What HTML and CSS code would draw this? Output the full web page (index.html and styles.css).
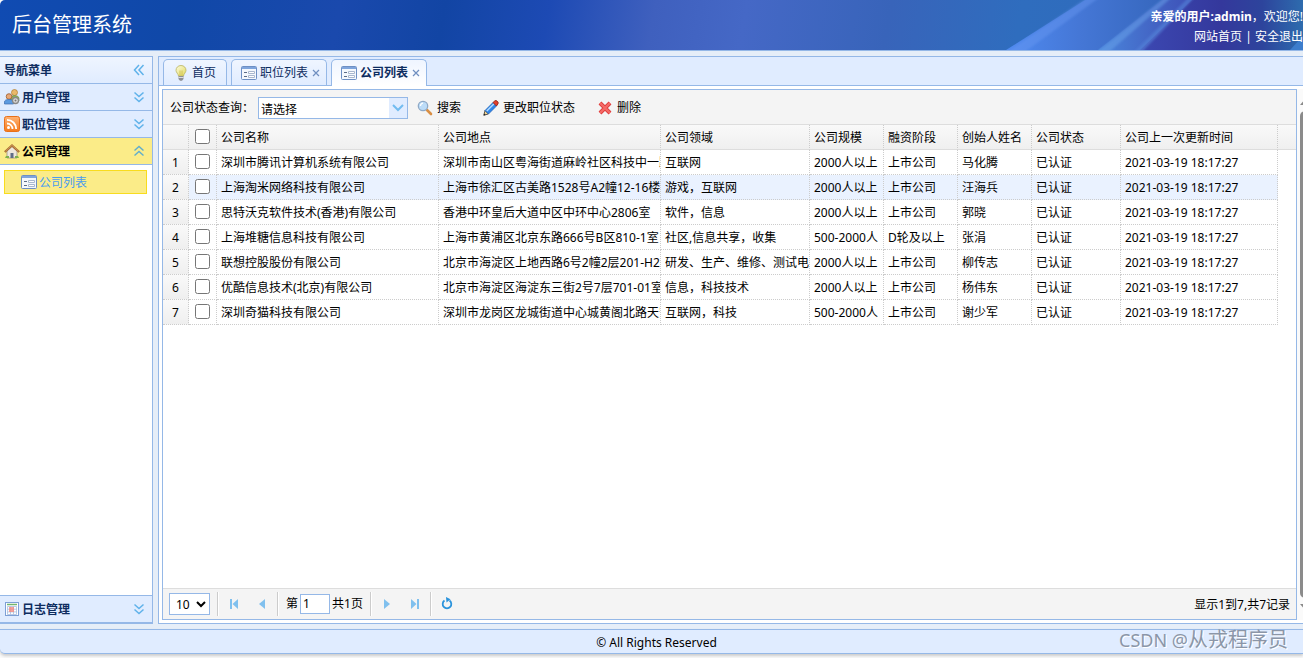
FILE: index.html
```html
<!DOCTYPE html>
<html lang="zh-CN">
<head>
<meta charset="utf-8">
<title>后台管理系统</title>
<link rel="stylesheet" href="styles.css">
</head>
<body>
<svg class="defs" aria-hidden="true">
  <defs>
    <linearGradient id="bulb" x1="0" y1="0" x2="1" y2="1"><stop offset="0" stop-color="#fdfce0"/><stop offset="1" stop-color="#e0d95a"/></linearGradient>
    <linearGradient id="rss" x1="0" y1="0" x2="0" y2="1"><stop offset="0" stop-color="#ffb273"/><stop offset="1" stop-color="#f57a1c"/></linearGradient>
    <symbol id="i-form" viewBox="0 0 16 16">
      <rect x="0.5" y="1.5" width="15" height="13" rx="1" fill="#f4f8fd" stroke="#6d8fc4"/>
      <path d="M1 2h14v2H1z" fill="#7fa5dc"/>
      <path d="M3 7.500h3M3 11.500h3" stroke="#5b6b86"/>
      <path d="M7.500 6.500h6v2h-6zM7.500 10.500h6v2h-6z" fill="#fff" stroke="#a9b8cf"/>
    </symbol>
    <symbol id="i-down" viewBox="0 0 16 16"><path d="M3.500 3.500 8 7.500l4.500-4M3.500 8.500 8 12.500l4.500-4" fill="none" stroke="#5fb2ea" stroke-width="1.500"/></symbol>
    <symbol id="i-up" viewBox="0 0 16 16"><path d="M3.500 7.500 8 3.500l4.500 4M3.500 12.500 8 8.500l4.500 4" fill="none" stroke="#62aecb" stroke-width="1.500"/></symbol>
    <symbol id="i-left" viewBox="0 0 16 16"><path d="M8 3 3.500 8 8 13M12.500 3 8 8l4.500 5" fill="none" stroke="#5fb2ea" stroke-width="1.500"/></symbol>
    <symbol id="i-close" viewBox="0 0 8 8"><path d="M1 1l6 6M7 1l-6 6" fill="none" stroke="#6f8fc0" stroke-width="1.200"/></symbol>
  </defs>
</svg>
<div class="app">
  <header class="banner">
    <svg class="banner-art" viewBox="0 0 353 50" preserveAspectRatio="none" aria-hidden="true">
      <defs>
        <linearGradient id="b1" x1="0" y1="0" x2="1" y2="0"><stop offset="0" stop-color="#4f8af0"/><stop offset="0.450" stop-color="#4577d6"/><stop offset="1" stop-color="#3566bc"/></linearGradient>
        <linearGradient id="b2" x1="0" y1="0" x2="1" y2="0"><stop offset="0" stop-color="#4a86dc"/><stop offset="0.500" stop-color="#4364c4"/><stop offset="1" stop-color="#3a46b0"/></linearGradient>
        <linearGradient id="b3" x1="0" y1="0" x2="1" y2="0"><stop offset="0" stop-color="#3c48b2"/><stop offset="0.500" stop-color="#34389c"/><stop offset="0.750" stop-color="#2d449c"/><stop offset="1" stop-color="#2e6cae"/></linearGradient>
        <filter id="soft"><feGaussianBlur stdDeviation="1"/></filter>
      </defs>
      <path d="M56 50 135 0H218L152 50z" fill="url(#b1)"/>
      <path d="M148 50 212 0h50L196 50z" fill="url(#b2)"/>
      <path d="M190 50 242 0H353V50z" fill="url(#b3)"/>
      <g filter="url(#soft)">
        <path d="M54 54 138-3h12L72 54z" fill="#6c9cf2" opacity="0.400"/>
        <path d="M146 53 214-2h7L158 53z" fill="#6aa2ea" opacity="0.500"/>
        <path d="M184 52 238-2h6L192 52z" fill="#5584d8" opacity="0.600"/>
      </g>
      <path d="M340 50 353 36V50z" fill="#3d7dcc"/>
    </svg>
    <h1 class="title">后台管理系统</h1>
    <div class="user">
      <p><strong>亲爱的用户:admin</strong>，欢迎您!</p>
      <p><a href="#">网站首页</a> | <a href="#">安全退出</a></p>
    </div>
  </header>

  <div class="body">
    <aside class="side">
      <div class="side-head"><span class="grow">导航菜单</span><button class="tool" aria-label="收起"><svg><use href="#i-left"/></svg></button></div>
      <button class="acc">
        <svg viewBox="0 0 16 16"><circle cx="10.500" cy="3.500" r="3" fill="#e9b96a" stroke="#b07a2c" stroke-width="0.700"/><path d="M6.500 12V9q0-2.500 4-2.500T15 9v3z" fill="#8fb05a" stroke="#6a8a3c" stroke-width="0.600"/><circle cx="5" cy="7.500" r="2.800" fill="#e8a878" stroke="#9a5a2c" stroke-width="0.800"/><path d="M0.500 15v-2q0-2.500 4.500-2.500T9.500 13v2z" fill="#5c9be0" stroke="#3c6cae" stroke-width="0.700"/><circle cx="11.500" cy="11.500" r="3" fill="#ddd" stroke="#888" stroke-width="1.300"/><circle cx="11.500" cy="11.500" r="1" fill="#777"/></svg>
        <span class="grow">用户管理</span><svg><use href="#i-down"/></svg></button>
      <button class="acc">
        <svg viewBox="0 0 16 16"><rect x="0.500" y="0.500" width="15" height="15" rx="2" fill="url(#rss)" stroke="#e8701a"/><circle cx="4.500" cy="11.500" r="1.500" fill="#fff"/><path d="M3 7.500a5.500 5.500 0 0 1 5.500 5.500M3 3.800a9.200 9.200 0 0 1 9.200 9.200" fill="none" stroke="#fff" stroke-width="1.800"/></svg>
        <span class="grow">职位管理</span><svg><use href="#i-down"/></svg></button>
      <button class="acc acc-on" aria-expanded="true">
        <svg viewBox="0 0 16 16"><path d="M3 8 8 3.500 13 8v7H3z" fill="#eee7dc" stroke="#8f8678" stroke-width="0.700"/><path d="M0.800 9 8 2.500 15.200 9" fill="none" stroke="#a86c32" stroke-width="2.200"/><path d="M1.500 8.200 8 2.300l6.500 5.900" fill="none" stroke="#d9a566" stroke-width="0.700"/><path d="M6.500 10h3v5h-3z" fill="#5f6c86"/><path d="M1 15h4v-2H2zM11 15h4l-1-2h-3z" fill="#7eb04c"/></svg>
        <span class="grow">公司管理</span><svg><use href="#i-up"/></svg></button>
      <nav class="side-list"><a class="side-link" href="#"><svg><use href="#i-form"/></svg><span class="grow">公司列表</span></a></nav>
      <button class="acc acc-last">
        <svg viewBox="0 0 16 16"><rect x="1.500" y="1.500" width="13" height="13" fill="#fff" stroke="#7da0d6"/><path d="M3 3.500h10" stroke="#74b56e" stroke-width="1.500"/><path d="M3.500 5.500h9v8h-9zM3.500 8.200h9M3.500 10.900h9M6.500 5.500v8M9.500 5.500v8" fill="none" stroke="#a9bede" stroke-width="0.800"/><path d="M5 6h5v5H5z" fill="#f58a80" opacity="0.800"/></svg>
        <span class="grow">日志管理</span><svg><use href="#i-down"/></svg></button>
    </aside>

    <main class="main">
      <div class="tabs">
        <div class="tab"><button class="tab-btn"><svg viewBox="0 0 16 16"><path d="M8 0.500c3 0 5 2.200 5 4.800 0 2.200-2.300 3.500-2.500 5.700h-5C5.300 8.800 3 7.500 3 5.300 3 2.700 5 0.500 8 0.500z" fill="url(#bulb)" stroke="#b9b35e" stroke-width="0.800"/><path d="M7 5.500v5M9 5.500v5" stroke="#c8b53c" stroke-width="0.700"/><path d="M5.500 11h5v3L9 15.700H7L5.500 14z" fill="#8d8f94"/><path d="M5.500 12.500h5" stroke="#ddd"/></svg>首页</button></div>
        <div class="tab"><button class="tab-btn"><svg><use href="#i-form"/></svg>职位列表</button><button class="close" aria-label="关闭职位列表"><svg><use href="#i-close"/></svg></button></div>
        <div class="tab tab-on"><button class="tab-btn"><svg><use href="#i-form"/></svg>公司列表</button><button class="close" aria-label="关闭公司列表"><svg><use href="#i-close"/></svg></button></div>
      </div>
      <div class="view">
        <section class="grid">
          <div class="toolbar">
            <label for="status">公司状态查询：</label>
            <span class="combo"><select id="status"><option>请选择</option></select><svg viewBox="0 0 18 20" aria-hidden="true"><path d="M4 7l5 5 5-5" fill="none" stroke="#72bcf0" stroke-width="2"/></svg></span>
            <button class="act"><svg viewBox="0 0 16 16"><path d="M10 10l4 4" stroke="#d98f45" stroke-width="2.600" stroke-linecap="round"/><circle cx="6" cy="6" r="4.700" fill="#bcdcf8" stroke="#8fa9c6" stroke-width="1.300"/><path d="M3.500 6A2.600 2.600 0 0 1 6 3.200" stroke="#fff" stroke-width="1.300" fill="none"/></svg>搜索</button>
            <button class="act"><svg viewBox="0 0 16 16"><path d="M0.800 15.200 2 10.500 5.500 14z" fill="#f7d790" stroke="#333" stroke-width="0.800"/><path d="M2 10.500 10 2.500 13.500 6 5.500 14z" fill="#2f86ea" stroke="#1d5cb0" stroke-width="0.700"/><path d="M3.800 11 11 3.800" stroke="#b4dcff" stroke-width="1.500"/><path d="M10 2.500 12 0.700q1-.5 2 .3l.8.800q.8 1 .2 2L13.500 6z" fill="#e3402c" stroke="#8c1c10" stroke-width="0.800"/><path d="M0.600 15.400l.6-2 1.500 1.500z" fill="#222"/></svg>更改职位状态</button>
            <button class="act"><svg viewBox="0 0 16 16"><path d="M3 3l10 10M13 3 3 13" stroke="#dc3a3a" stroke-width="4"/><path d="M3 3l10 10M13 3 3 13" stroke="#f56a66" stroke-width="2.400"/></svg>删除</button>
          </div>
          <div class="table-wrap">
            <table>
              <colgroup><col class="c-no"><col class="c-ck"><col class="c-xl"><col class="c-xl"><col class="c-lg"><col class="c-sm"><col class="c-sm"><col class="c-sm"><col class="c-md"><col class="c-time"><col></colgroup>
              <thead><tr><th></th><th><input type="checkbox" aria-label="全选"></th><th>公司名称</th><th>公司地点</th><th>公司领域</th><th>公司规模</th><th>融资阶段</th><th>创始人姓名</th><th>公司状态</th><th>公司上一次更新时间</th><th></th></tr></thead>
              <tbody>
                <tr><td>1</td><td><input type="checkbox" aria-label="选择第1行"></td><td>深圳市腾讯计算机系统有限公司</td><td>深圳市南山区粤海街道麻岭社区科技中一路</td><td>互联网</td><td>2000人以上</td><td>上市公司</td><td>马化腾</td><td>已认证</td><td>2021-03-19 18:17:27</td><td></td></tr>
                <tr class="hover"><td>2</td><td><input type="checkbox" aria-label="选择第2行"></td><td>上海淘米网络科技有限公司</td><td>上海市徐汇区古美路1528号A2幢12-16楼</td><td>游戏，互联网</td><td>2000人以上</td><td>上市公司</td><td>汪海兵</td><td>已认证</td><td>2021-03-19 18:17:27</td><td></td></tr>
                <tr><td>3</td><td><input type="checkbox" aria-label="选择第3行"></td><td>思特沃克软件技术(香港)有限公司</td><td>香港中环皇后大道中区中环中心2806室</td><td>软件，信息</td><td>2000人以上</td><td>上市公司</td><td>郭晓</td><td>已认证</td><td>2021-03-19 18:17:27</td><td></td></tr>
                <tr><td>4</td><td><input type="checkbox" aria-label="选择第4行"></td><td>上海堆糖信息科技有限公司</td><td>上海市黄浦区北京东路666号B区810-1室</td><td>社区,信息共享，收集</td><td>500-2000人</td><td>D轮及以上</td><td>张涓</td><td>已认证</td><td>2021-03-19 18:17:27</td><td></td></tr>
                <tr><td>5</td><td><input type="checkbox" aria-label="选择第5行"></td><td>联想控股股份有限公司</td><td>北京市海淀区上地西路6号2幢2层201-H2</td><td>研发、生产、维修、测试电</td><td>2000人以上</td><td>上市公司</td><td>柳传志</td><td>已认证</td><td>2021-03-19 18:17:27</td><td></td></tr>
                <tr><td>6</td><td><input type="checkbox" aria-label="选择第6行"></td><td>优酷信息技术(北京)有限公司</td><td>北京市海淀区海淀东三街2号7层701-01室</td><td>信息，科技技术</td><td>2000人以上</td><td>上市公司</td><td>杨伟东</td><td>已认证</td><td>2021-03-19 18:17:27</td><td></td></tr>
                <tr><td>7</td><td><input type="checkbox" aria-label="选择第7行"></td><td>深圳奇猫科技有限公司</td><td>深圳市龙岗区龙城街道中心城黄阁北路天安</td><td>互联网，科技</td><td>500-2000人</td><td>上市公司</td><td>谢少军</td><td>已认证</td><td>2021-03-19 18:17:27</td><td></td></tr>
              </tbody>
            </table>
          </div>
          <div class="pager">
            <select class="size" aria-label="每页条数"><option>10</option></select>
            <i class="sep"></i>
            <button class="pg" aria-label="第一页"><svg viewBox="0 0 16 16"><path d="M4 3h2v10H4zM12 3v10L6.500 8z"/></svg></button>
            <button class="pg" aria-label="上一页"><svg viewBox="0 0 16 16"><path d="M11 3v10L5 8z"/></svg></button>
            <i class="sep"></i>
            <label class="page">第<input type="text" value="1">共1页</label>
            <i class="sep"></i>
            <button class="pg" aria-label="下一页"><svg viewBox="0 0 16 16"><path d="M5 3v10l6-5z"/></svg></button>
            <button class="pg" aria-label="最后一页"><svg viewBox="0 0 16 16"><path d="M4 3v10l5.500-5zM10 3h2v10h-2z"/></svg></button>
            <i class="sep"></i>
            <button class="pg" aria-label="刷新"><svg viewBox="0 0 16 16"><path d="M5.500 4.500A4.300 4.300 0 1 0 10.500 4.500" fill="none" stroke="#2a93dc" stroke-width="1.800"/><path d="M7 1l4.500 2.200L7.500 6.500z" fill="#2a93dc"/></svg></button>
            <span class="info">显示1到7,共7记录</span>
          </div>
        </section>
        <div class="scroll" aria-hidden="true">
          <svg viewBox="0 0 12 8"><path d="M1 7l5-6 5 6z"/></svg>
          <i class="thumb"></i>
          <svg viewBox="0 0 12 8"><path d="M1 1l5 6 5-6z"/></svg>
        </div>
      </div>
    </main>
  </div>

  <footer class="foot">© All Rights Reserved<span class="mark"><span class="mark-latin">CSDN @</span>从戎程序员</span></footer>
</div>
</body>
</html>
```
FILE: styles.css
```css
* { box-sizing: border-box; }
body {
  margin: 0;
  background: #fafafa;
  color: #000;
  font: 12px/20px "Noto Sans", "Noto Sans CJK SC", sans-serif;
}
button, input, select { font: inherit; color: inherit; margin: 0; }
button { border: 0; padding: 0; background: none; cursor: pointer; }
svg { display: block; flex: none; width: 16px; height: 16px; }
p, h1 { margin: 0; }
.defs { position: absolute; width: 0; height: 0; }
.grow { flex: 1; padding-top: 2px; text-align: left; }

.app {
  display: flex;
  flex-direction: column;
  height: 100vh;
  padding-bottom: 4px;
  overflow: hidden;
}

.banner {
  position: relative;
  display: flex;
  justify-content: space-between;
  align-items: center;
  height: 51px;
  padding-left: 12px;
  border-bottom: 1px solid #95b8e7;
  border-top-left-radius: 5px;
  background: linear-gradient(100deg, #104bb2 0%, #1048a8 14%, #1a49ad 26%, #1245a4 34%, #1d4ab4 42%, #3f60be 50%, #4568c6 57%, #3864ba 68%, #2f6dbe 78%, #3069b8 100%);
  color: #fff;
}
.banner-art { position: absolute; top: 0; right: 0; width: 353px; height: 50px; }
.title { position: relative; font-size: 20px; line-height: 30px; font-weight: 400; }
.user { position: relative; padding-top: 4px; text-align: right; white-space: nowrap; }
.user a { color: #fff; text-decoration: none; }

.body {
  display: flex;
  flex: 1;
  gap: 5px;
  min-height: 0;
  padding: 5px 0;
  background: #e6eef8;
}

.side {
  display: flex;
  flex-direction: column;
  width: 153px;
  flex: none;
  border: solid #95b8e7;
  border-width: 1px 1px 1px 0;
  background: #fff;
  color: #0e2d5f;
  font-weight: 700;
}
.side-head, .acc {
  display: flex;
  align-items: center;
  gap: 2px;
  height: 27px;
  padding: 0 5px 0 4px;
  border-bottom: 1px solid #95b8e7;
  background: #e0ecff;
}
.side-head { background: linear-gradient(#eff5ff, #e0ecff); }
.acc-on { background: #fbec88; color: #000; }
.side-list { flex: 1; padding: 5px 5px 0 4px; border-bottom: 1px solid #95b8e7; }
.side-link {
  display: flex;
  align-items: center;
  gap: 2px;
  height: 24px;
  padding-left: 16px;
  border: 1px solid #f8dc1e;
  background: #fbec88;
  color: #4a9cf0;
  font-weight: 400;
  text-decoration: none;
}

.main {
  display: flex;
  flex: 1;
  flex-direction: column;
  min-width: 0;
  border: solid #95b8e7;
  border-width: 1px 0 1px 1px;
  background: #fff;
}
.tabs {
  display: flex;
  gap: 4px;
  height: 29px;
  padding: 2px 0 0 4px;
  border-bottom: 1px solid #95b8e7;
  background: #e0ecff;
}
.tab {
  display: flex;
  align-items: center;
  height: 26px;
  padding: 0 10px 0 9px;
  border: 1px solid #95b8e7;
  border-bottom: 0;
  border-radius: 5px 5px 0 0;
  background: linear-gradient(#eff5ff, #e0ecff);
  color: #0e2d5f;
}
.tab:not(:first-child) { padding-right: 6px; }
.tab-on { height: 27px; background: linear-gradient(#eff5ff, #fff); font-weight: 700; }
.tab-btn { display: flex; align-items: center; gap: 3px; font-weight: inherit; }
.close { margin-left: 4px; }
.close svg { width: 8px; height: 8px; }

.view { display: flex; flex: 1; min-height: 0; padding: 3px 0 3px 3px; }
.grid {
  display: flex;
  flex: 1;
  flex-direction: column;
  min-width: 0;
  border: 1px solid #95b8e7;
}
.toolbar {
  display: flex;
  align-items: center;
  height: 35px;
  padding: 2px 0 0 7px;
  border-bottom: 1px solid #ddd;
  background: #f4f4f4;
}
.combo { position: relative; width: 150px; margin: 0 9px 0 4px; }
.combo select {
  display: block;
  appearance: none;
  width: 100%;
  height: 22px;
  padding: 2px 20px 0 2px;
  border: 1px solid #95b8e7;
  border-radius: 0;
  background: #fff;
}
.combo svg { position: absolute; top: 1px; right: 1px; width: 18px; height: 20px; background: #e0ecff; pointer-events: none; }
.act { display: flex; align-items: center; gap: 4px; margin-right: 22px; }

.table-wrap { flex: 1; min-height: 0; overflow: hidden; }
table { width: 100%; border-collapse: separate; border-spacing: 0; table-layout: fixed; }
.c-no { width: 26px; }
.c-ck { width: 28px; }
.c-xl { width: 222px; }
.c-lg { width: 149px; }
.c-sm { width: 74px; }
.c-md { width: 89px; }
.c-time { width: 157px; }
th, td {
  height: 25px;
  padding: 2px 0 0 4px;
  overflow: hidden;
  border: dotted #ccc;
  border-width: 0 1px 1px 0;
  font-weight: 400;
  text-align: left;
  white-space: nowrap;
}
th { border-bottom: 1px solid #ddd; }
thead tr { background: linear-gradient(#f9f9f9, #efefef); }
td:first-child { padding: 2px 0 0; background: linear-gradient(#f9f9f9, #efefef); text-align: center; }
th:last-child { border-right: 0; }
td:last-child { border: 0; background: #fff; }
th:nth-child(2), td:nth-child(2) { padding: 0 0 1px; }
.hover { background: #eaf2ff; }
input[type="checkbox"] { display: block; width: 15px; height: 15px; margin: 0 auto; }

.pager {
  display: flex;
  align-items: center;
  height: 31px;
  padding: 0 6px;
  border-top: 1px solid #ddd;
  background: #f4f4f4;
}
.size { width: 41px; height: 22px; padding-left: 2px; margin-right: 6px; border: 1px solid #95b8e7; background-color: #fff; }
.sep { width: 2px; height: 24px; margin: 0 1px; border-left: 1px solid #ccc; background: #fff; }
.pg { display: grid; place-items: center; width: 28px; height: 24px; }
.pg svg { fill: #80c0ee; }
.page { display: flex; align-items: center; margin: 0 6px; }
.page input { width: 30px; height: 20px; margin: 0 2px; padding: 0 2px; border: 1px solid #95b8e7; }
.info { margin-left: auto; padding-top: 2px; }

.scroll {
  display: flex;
  flex-direction: column;
  align-items: flex-start;
  gap: 5px;
  width: 6px;
  padding: 9px 0 9px 2px;
  overflow: hidden;
  background: #fafafa;
}
.scroll svg { width: 12px; height: 8px; fill: #8a8a8a; }
.thumb { flex: 1; width: 10px; margin-left: 1px; border-radius: 5px; background: #8b8b8b; }

.foot {
  position: relative;
  height: 25px;
  padding-left: 10px;
  border: solid #95b8e7;
  border-width: 1px 0;
  border-bottom-left-radius: 5px;
  background: #e0ecff;
  box-shadow: 0 2px 3px #ccc;
  line-height: 25px;
  text-align: center;
}
.mark {
  position: absolute;
  top: -3px;
  right: 15px;
  color: #8b96a8;
  font: 20px/25px "Noto Sans", "Noto Sans CJK SC", sans-serif;
  text-shadow: 1px 1px 0 #fff;
}
.mark-latin { font-size: 18px; }
```
